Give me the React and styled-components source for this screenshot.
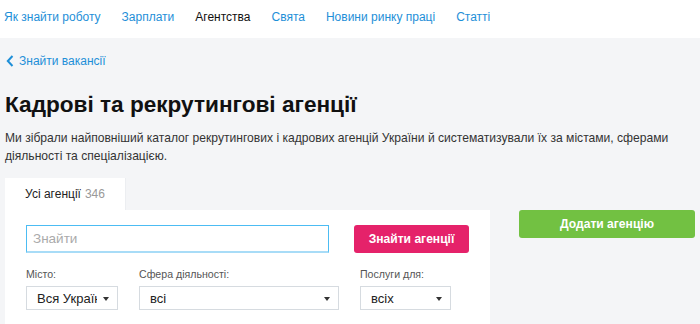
import React from "react";
import styled, { createGlobalStyle } from "styled-components";

const GlobalStyle = createGlobalStyle`
  body {
    margin: 0;
    background: #f4f5f7;
    font-family: "Liberation Sans", Arial, sans-serif;
    color: #222;
  }
`;

const navItems = [
  { label: "Як знайти роботу" },
  { label: "Зарплати" },
  { label: "Агентства", active: true },
  { label: "Свята" },
  { label: "Новини ринку праці" },
  { label: "Статті" },
];

const App = () => (
  <>
    <GlobalStyle />
    <NavBar>
      {navItems.map((item) => (
        <NavLink key={item.label} $active={item.active}>
          {item.label}
        </NavLink>
      ))}
    </NavBar>
    <Page>
      <BackLink>
        <svg width="8" height="12" viewBox="0 0 8 12">
          <path d="M6.5 1 L1.8 6 L6.5 11" fill="none" stroke="#1e8fd8" strokeWidth="2" />
        </svg>
        Знайти вакансії
      </BackLink>
      <Title>Кадрові та рекрутингові агенції</Title>
      <Lead>
        Ми зібрали найповніший каталог рекрутингових і кадрових агенцій України й
        систематизували їх за містами, сферами діяльності та спеціалізацією.
      </Lead>
      <Main>
        <SearchColumn>
          <Tabs>
            <Tab>
              Усі агенції <Count>346</Count>
            </Tab>
          </Tabs>
          <Panel>
            <SearchRow>
              <SearchInput placeholder="Знайти" />
              <Button $color="#e5226a">Знайти агенції</Button>
            </SearchRow>
            <Filters>
              <Filter>
                <Label>Місто:</Label>
                <Select $width="92px">
                  <SelectText>Вся Україна</SelectText>
                  <Arrow />
                </Select>
              </Filter>
              <Filter>
                <Label>Сфера діяльності:</Label>
                <Select $width="200px">
                  <SelectText>всі</SelectText>
                  <Arrow />
                </Select>
              </Filter>
              <Filter>
                <Label>Послуги для:</Label>
                <Select $width="91px">
                  <SelectText>всіх</SelectText>
                  <Arrow />
                </Select>
              </Filter>
            </Filters>
          </Panel>
        </SearchColumn>
        <Aside>
          <Button $color="#72c142" $block>Додати агенцію</Button>
        </Aside>
      </Main>
    </Page>
  </>
);

export default App;

const NavBar = styled.nav`
  display: flex;
  gap: 21px;
  align-items: center;
  height: 38px;
  padding: 0 4px;
  background: #fff;
`;

const NavLink = styled.a`
  font-size: 12px;
  color: ${(p) => (p.$active ? "#111" : "#1e8fd8")};
  text-decoration: none;
  margin-top: -5px;
`;

const Page = styled.div`
  padding: 15px 5px 0;
`;

const BackLink = styled.a`
  display: flex;
  align-items: center;
  gap: 5px;
  padding-left: 1px;
  font-size: 12px;
  color: #1e8fd8;
  height: 16px;
`;

const Title = styled.h1`
  margin: 21px 0 0;
  font-size: 22.6px;
  line-height: 30px;
  font-weight: bold;
  color: #111;
`;

const Lead = styled.p`
  margin: 9px 0 0;
  font-size: 12.1px;
  line-height: 18px;
  color: #333;
  max-width: 690px;
`;

const Main = styled.div`
  display: flex;
  gap: 29px;
  margin-top: 13px;
`;

const SearchColumn = styled.div`
  width: 485px;
`;

const Tabs = styled.div`
  display: flex;
`;

const Tab = styled.div`
  width: 121px;
  height: 32px;
  display: flex;
  align-items: center;
  justify-content: center;
  background: #fff;
  border-right: 1px solid #eceef1;
  box-sizing: border-box;
  font-size: 12px;
  color: #222;
`;

const Count = styled.span`
  color: #999;
  margin-left: 4px;
`;

const Panel = styled.div`
  background: #fff;
  padding: 15px 21px 20px;
`;

const SearchRow = styled.div`
  display: flex;
  gap: 25px;
`;

const SearchInput = styled.input`
  width: 303px;
  height: 28px;
  box-sizing: border-box;
  border: 1px solid #4cbcf3;
  border-bottom: 2px solid #a8dcf7;
  padding: 0 6px;
  font-family: inherit;
  font-size: 13.5px;
  outline: none;
  &::placeholder {
    color: #aaa;
  }
`;

const Button = styled.button`
  height: 28px;
  width: ${(p) => (p.$block ? "100%" : "115px")};
  border: none;
  border-radius: 3px;
  background: ${(p) => p.$color};
  color: #fff;
  font-family: inherit;
  font-size: 12.1px;
  font-weight: bold;
  cursor: pointer;
`;

const Aside = styled.div`
  width: 176px;
  padding-top: 32px;
`;

const Filters = styled.div`
  display: flex;
  gap: 21px;
  margin-top: 14px;
`;

const Filter = styled.div`
  display: flex;
  flex-direction: column;
  gap: 5px;
`;

const Label = styled.span`
  font-size: 10.6px;
  line-height: 14px;
  color: #555;
`;

const Select = styled.div`
  position: relative;
  width: ${(p) => p.$width};
  height: 24px;
  box-sizing: border-box;
  border: 1px solid #d6dbe0;
  display: flex;
  align-items: center;
  padding: 0 20px 0 10px;
  overflow: hidden;
`;

const SelectText = styled.span`
  font-size: 13px;
  color: #222;
  white-space: nowrap;
  overflow: hidden;
`;

const Arrow = styled.span`
  position: absolute;
  right: 8px;
  top: 10px;
  border-left: 3px solid transparent;
  border-right: 3px solid transparent;
  border-top: 4px solid #333;
`;
